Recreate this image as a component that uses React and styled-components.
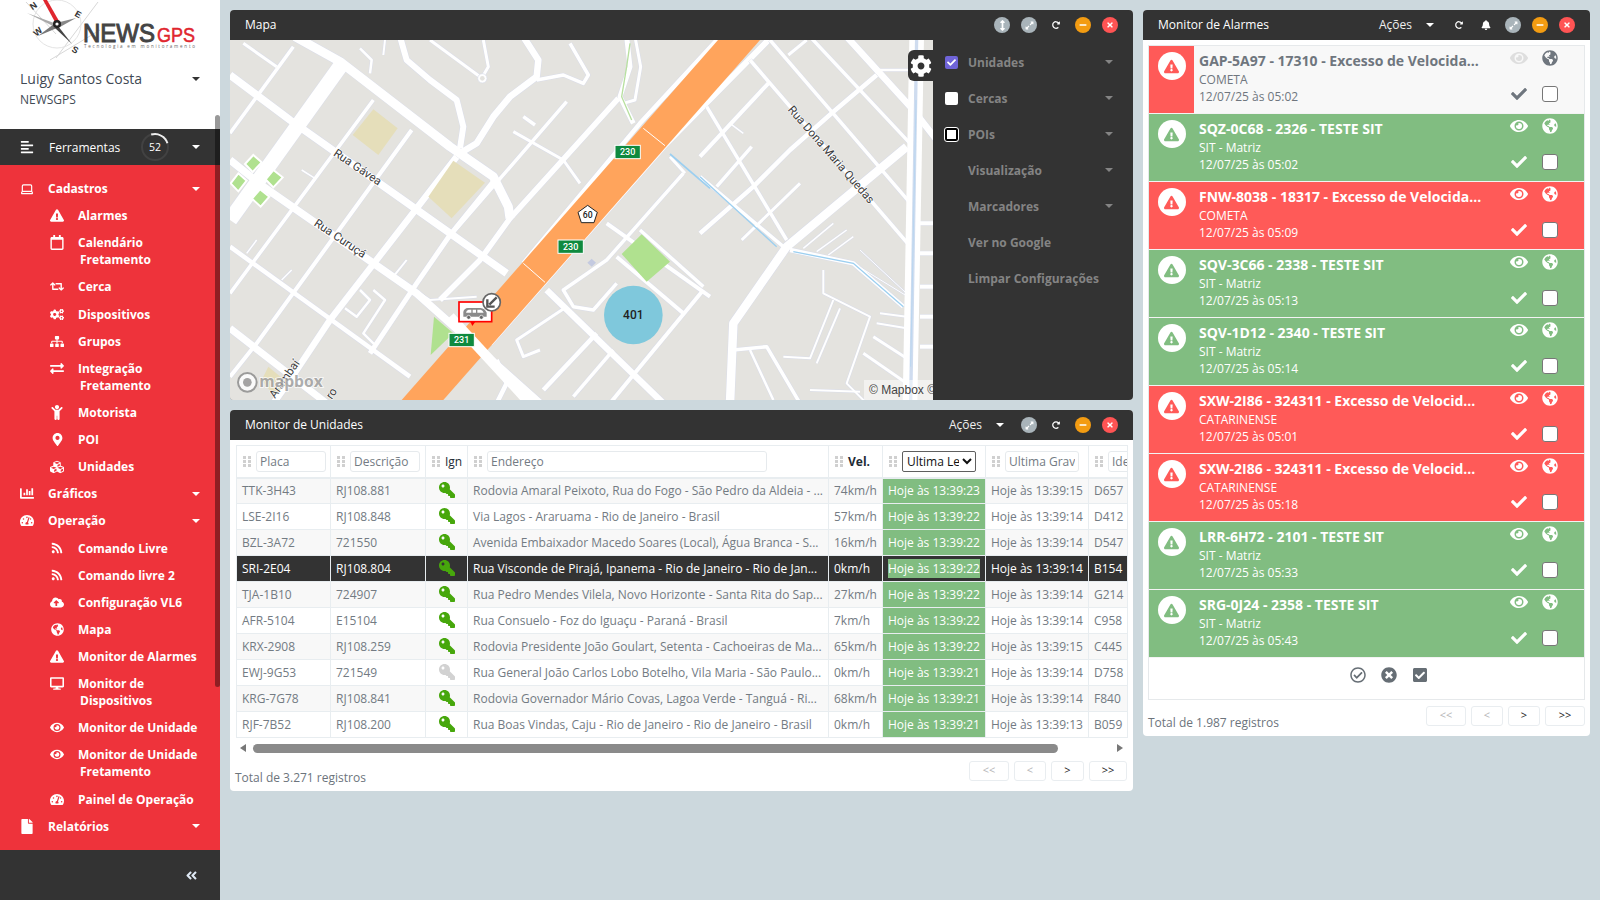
import React from "react";
import styled, { createGlobalStyle } from "styled-components";
import {
  FaAlignLeft, FaExclamationTriangle, FaRegCalendar, FaRetweet, FaCogs, FaSitemap, FaExchangeAlt,
  FaChild, FaMapMarkerAlt, FaCubes, FaChartBar, FaTachometerAlt, FaRss, FaCloudUploadAlt,
  FaGlobeAmericas, FaDesktop, FaEye, FaFile, FaAngleDoubleLeft, FaKey, FaCog, FaExpandAlt,
  FaArrowsAltV, FaRedoAlt, FaMinus, FaTimes, FaBell, FaCheck, FaRegCheckCircle, FaTimesCircle,
  FaCheckSquare,
} from "react-icons/fa";
import { LuLaptop } from "react-icons/lu";

const GlobalStyle = createGlobalStyle`
  html, body { margin: 0; padding: 0; height: 900px; overflow: hidden; background: #ccd8dd; }
  body { font-family: "Open Sans", "Liberation Sans", sans-serif; }
  * { box-sizing: border-box; }
`;

const Page = styled.div`
  display: flex;
  width: 1600px;
  height: 900px;
`;

/* sidebar */
const Sidebar = styled.aside`
  position: relative;
  width: 220px;
  height: 900px;
  display: flex;
  flex-direction: column;
  background: #fff;
  flex: none;
`;
const SideScroll = styled.div`
  position: absolute;
  right: 0;
  top: 115px;
  width: 5px;
  height: 572px;
  border-radius: 3px;
  background: rgba(0, 0, 0, 0.4);
`;
const UserBlock = styled.div`
  height: 129px;
  overflow: hidden;
`;
const LogoSvg = styled.svg`
  display: block;
  width: 220px;
  height: 62px;
`;
const UserRow = styled.div`
  display: flex;
  align-items: center;
  justify-content: space-between;
  padding: 7px 20px 0 20px;
  font-size: 14px;
  line-height: 20px;
  color: #3f4a55;
`;
const UserCompany = styled.div`
  padding: 2px 20px 0;
  font-size: 12px;
  line-height: 18px;
  color: #3f4a55;
`;
const Caret = styled.span`
  display: inline-block;
  width: 0;
  height: 0;
  border-left: 4px solid transparent;
  border-right: 4px solid transparent;
  border-top: 4px solid ${(p) => p.$color || "#fff"};
  flex: none;
`;
const ToolBar = styled.div`
  height: 36px;
  display: flex;
  align-items: center;
  padding: 0 20px;
  background: #333;
  color: #fff;
  font-size: 12px;
`;
const ToolLabel = styled.span`
  margin-left: 15px;
  flex: 1;
`;
const Spinner = styled.div`
  position: relative;
  width: 28px;
  height: 28px;
  margin-right: 23px;
  border-radius: 50%;
  border: 2px solid #424242;
  font-size: 10.5px;
  line-height: 24px;
  text-align: center;
  &::after {
    content: "";
    position: absolute;
    inset: -2px;
    border-radius: 50%;
    border: 2px solid transparent;
    border-top-color: #eee;
    transform: rotate(28deg);
  }
`;
const Menu = styled.nav`
  flex: 1;
  background: #ee333b;
  padding-top: 10px;
  color: #fff;
  font-size: 12px;
  font-weight: 700;
  line-height: 17px;
`;
const MenuRow = styled.div`
  display: flex;
  align-items: flex-start;
  padding: 5.07px 20px 5.07px ${(p) => (p.$sub ? "50px" : "20px")};
`;
const MenuIcon = styled.span`
  width: 14px;
  height: 17px;
  margin-right: 14px;
  flex: none;
  display: flex;
  align-items: center;
  justify-content: center;
  font-size: ${(p) => p.$size || 15}px;
  overflow: visible;
`;
const MenuText = styled.span`
  flex: 1;
  padding-left: 2px;
  text-indent: -2px;
  margin-right: ${(p) => (p.$sub ? "-10px" : "0")};
  white-space: pre-line;
`;
const MenuCaretSlot = styled.span`
  height: 17px;
  display: flex;
  align-items: center;
`;
const SideFoot = styled.div`
  height: 50px;
  background: #333;
  color: #dfe9f5;
  display: flex;
  align-items: center;
  justify-content: flex-end;
  padding-right: 22px;
  font-size: 13px;
`;

/* main */
const Main = styled.main`
  flex: 1;
  display: grid;
  grid-template-columns: 903px 447px;
  gap: 10px;
  padding: 10px;
  align-items: start;
`;
const Column = styled.div`
  display: flex;
  flex-direction: column;
  gap: 10px;
`;
const Panel = styled.section`
  background: #fff;
  border-radius: 4px;
  overflow: hidden;
`;
const PanelHead = styled.header`
  height: 30px;
  display: flex;
  align-items: center;
  background: #333;
  color: #fff;
  font-size: 12px;
  padding: 0 15px;
`;
const PanelTitle = styled.span`
  flex: 1;
  padding-bottom: 1px;
`;
const HeadTools = styled.div`
  display: flex;
  align-items: center;
  gap: 11px;
`;
const Acoes = styled.span`
  display: inline-flex;
  align-items: center;
  gap: 14px;
  margin-right: 17px;
  padding-bottom: 1px;
  color: #eee;
`;
const RoundBtn = styled.span`
  width: 16px;
  height: 16px;
  border-radius: 50%;
  display: flex;
  align-items: center;
  justify-content: center;
  background: ${(p) => p.$bg || "transparent"};
  color: #fff;
  font-size: ${(p) => p.$size || 8}px;
`;

/* map */
const MapBody = styled.div`
  height: 360px;
  display: flex;
  background: #333;
`;
const MapArea = styled.div`
  position: relative;
  width: 703px;
  height: 360px;
  overflow: hidden;
  background: #e4e3df;
`;
const MapSvg = styled.svg`
  display: block;
  width: 703px;
  height: 360px;
`;
const GearTab = styled.div`
  position: absolute;
  right: 0;
  top: 10px;
  width: 25px;
  height: 31px;
  border-radius: 6px 0 0 6px;
  background: #333;
  color: #fff;
  font-size: 22px;
  display: flex;
  align-items: center;
  justify-content: center;
`;
const Attribution = styled.div`
  position: absolute;
  right: 0;
  bottom: 0;
  width: 69px;
  height: 20px;
  overflow: hidden;
  white-space: nowrap;
  padding-left: 5px;
  background: rgba(255, 255, 255, 0.5);
  font-family: "Liberation Sans", sans-serif;
  font-size: 12px;
  line-height: 20px;
  color: #444;
`;
const Layers = styled.ul`
  flex: 1;
  list-style: none;
  margin: 0;
  padding: 4px 20px 0 12px;
`;
const LayerRow = styled.li`
  height: 36px;
  display: flex;
  align-items: center;
  color: #848484;
  font-size: 12px;
  font-weight: 700;
`;
const LayerCheck = styled.span`
  width: 13px;
  height: 13px;
  margin-right: 10px;
  flex: none;
  border-radius: 2px;
  display: flex;
  align-items: center;
  justify-content: center;
  color: #fff;
  font-size: 9px;
  visibility: ${(p) => (p.$kind === "none" ? "hidden" : "visible")};
  background: ${(p) => (p.$kind === "on" ? "#6f64d8" : "#fff")};
  border: ${(p) => (p.$kind === "focus" ? "2px solid #000" : "none")};
  outline: ${(p) => (p.$kind === "focus" ? "1px solid #fff" : "none")};
`;
const LayerLabel = styled.span`
  flex: 1;
`;

/* table */
const UnitsBody = styled.div`
  padding: 5px 6px 0;
`;
const Table = styled.table`
  width: 891px;
  table-layout: fixed;
  border-collapse: collapse;
  font-size: 12px;
  color: #737b83;
  border: 1px solid #e8edf0;
`;
const HeadCell = styled.th`
  height: 32px;
  padding: 0 0 0 6px;
  border: 1px solid #e8edf0;
  border-bottom-width: 2px;
  font-weight: ${(p) => (p.$bold ? 700 : 400)};
  color: #222b35;
  text-align: left;
  overflow: hidden;
`;
const HeadInner = styled.div`
  display: flex;
  align-items: center;
  gap: 5px;
  white-space: nowrap;
`;
const HeadInput = styled.input`
  width: ${(p) => p.$w}px;
  height: 21px;
  padding: 0 3px;
  border: 1px solid #e6eaed;
  border-radius: 3px;
  font: inherit;
  font-size: 12px;
  color: #737b83;
  background: #fff;
  outline: none;
`;
const HeadSelect = styled.select`
  width: 74px;
  height: 21px;
  padding: 0;
  border: 1px solid #5f5f5f;
  border-radius: 2px;
  font: inherit;
  font-size: 12px;
  color: #111;
  background: #fff;
`;
const Row = styled.tr`
  height: 26px;
  background: ${(p) => (p.$selected ? "#333" : p.$odd ? "#f8f8f8" : "#fff")};
  color: ${(p) => (p.$selected ? "#fff" : "inherit")};
`;
const Cell = styled.td`
  padding: 0 5px;
  border: 1px solid #e8edf0;
  white-space: nowrap;
  overflow: hidden;
  text-align: ${(p) => (p.$center ? "center" : "left")};
  background: ${(p) => (p.$live && !p.$selected ? "#81bd81" : "transparent")};
  color: ${(p) => (p.$live ? "#fff" : "inherit")};
`;
const LiveText = styled.span`
  background: ${(p) => (p.$selected ? "#81bd81" : "transparent")};
  padding: 1px 0;
`;
const KeyIcon = styled(FaKey)`
  transform: scaleX(-1);
  font-size: 16px;
  vertical-align: -3px;
  color: ${(p) => (p.$off ? "#d2d2d2" : "#47a70c")};
`;
const HScroll = styled.div`
  width: 891px;
  height: 16px;
  margin-top: 2px;
  display: flex;
  align-items: center;
  justify-content: space-between;
  padding: 0 4px;
`;
const ScrollArrow = styled.span`
  width: 0;
  height: 0;
  border-top: 4px solid transparent;
  border-bottom: 4px solid transparent;
  ${(p) => (p.$left ? "border-right: 6px solid #777;" : "border-left: 6px solid #777;")}
`;
const ScrollThumb = styled.span`
  width: 805px;
  height: 9px;
  margin: 0 auto 0 7px;
  border-radius: 5px;
  background: #8a8a8a;
`;
const Footer = styled.div`
  display: flex;
  align-items: flex-start;
  justify-content: space-between;
  padding: ${(p) => p.$pad};
  font-size: 12px;
  color: #6c747c;
`;
const FooterTotal = styled.span`
  padding-top: 8px;
  line-height: 18px;
`;
const Pager = styled.div`
  display: flex;
  gap: 5px;
`;
const PageBtn = styled.span`
  width: ${(p) => p.$w}px;
  height: 20px;
  border: 1px solid #e9edf0;
  border-radius: 3px;
  text-align: center;
  font-size: 11px;
  line-height: 16px;
  color: ${(p) => (p.$off ? "#b5b5b5" : "#222")};
`;

/* alarms */
const AlarmBody = styled.div`
  padding: 5px 5px 0;
`;
const AlarmBox = styled.div`
  border: 1px solid #e6e9eb;
`;
const AlarmRow = styled.div`
  height: 68px;
  display: flex;
  border-bottom: 1px solid #f3f3f3;
  background: ${(p) => (p.$tone === "red" ? "#ff5a58" : p.$tone === "green" ? "#81bd81" : "#f8f8f8")};
  color: ${(p) => (p.$tone === "gray" ? "#6f767e" : "#fff")};
`;
const AlarmSide = styled.div`
  width: 45px;
  flex: none;
  padding-top: 6px;
  display: flex;
  justify-content: center;
  background: ${(p) => (p.$tone === "gray" ? "#ff5a58" : "transparent")};
`;
const AlarmBadge = styled.span`
  width: 28px;
  height: 28px;
  border-radius: 50%;
  background: #fff;
  display: flex;
  align-items: center;
  justify-content: center;
  font-size: 15px;
  color: ${(p) => (p.$tone === "green" ? "#81bd81" : "#ff5a58")};
`;
const AlarmText = styled.div`
  width: 288px;
  padding: 5px 0 0 5px;
  flex: none;
`;
const AlarmTitle = styled.div`
  font-size: 14px;
  font-weight: 700;
  line-height: 20px;
  white-space: nowrap;
  overflow: hidden;
`;
const AlarmLine = styled.div`
  font-size: 12px;
  line-height: 17px;
`;
const AlarmActions = styled.div`
  display: grid;
  grid-template-columns: 31px 31px;
  grid-template-rows: 24px 36px;
  padding-left: 21px;
  justify-items: center;
  align-items: center;
  font-size: 16px;
`;
const GhostEye = styled(FaEye)`
  font-size: 18px;
  color: ${(p) => (p.$tone === "gray" ? "#dedede" : "#fff")};
`;
const CheckBox = styled.span`
  width: 16px;
  height: 16px;
  border: 1px solid #777;
  border-radius: 3px;
  background: #fff;
  margin-top: 11px;
`;
const CheckMark = styled(FaCheck)`
  margin-top: 11px;
`;
const AlarmFoot = styled.div`
  height: 41px;
  display: flex;
  justify-content: center;
  gap: 15px;
  padding: 9px 0 0 44px;
  color: #666e75;
  font-size: 16px;
`;

const sideMenu = [
  { label: "Cadastros", icon: <LuLaptop />, size: 16, open: true },
  { label: "Alarmes", icon: <FaExclamationTriangle />, sub: true },
  { label: "Calendário\nFretamento", icon: <FaRegCalendar />, sub: true },
  { label: "Cerca", icon: <FaRetweet />, sub: true },
  { label: "Dispositivos", icon: <FaCogs />, sub: true },
  { label: "Grupos", icon: <FaSitemap />, sub: true },
  { label: "Integração\nFretamento", icon: <FaExchangeAlt />, sub: true },
  { label: "Motorista", icon: <FaChild />, sub: true },
  { label: "POI", icon: <FaMapMarkerAlt />, sub: true, size: 13 },
  { label: "Unidades", icon: <FaCubes />, sub: true, size: 16 },
  { label: "Gráficos", icon: <FaChartBar />, open: true },
  { label: "Operação", icon: <FaTachometerAlt />, open: true },
  { label: "Comando Livre", icon: <FaRss />, sub: true, size: 12 },
  { label: "Comando livre 2", icon: <FaRss />, sub: true, size: 12 },
  { label: "Configuração VL6", icon: <FaCloudUploadAlt />, sub: true },
  { label: "Mapa", icon: <FaGlobeAmericas />, sub: true, size: 13 },
  { label: "Monitor de Alarmes", icon: <FaExclamationTriangle />, sub: true },
  { label: "Monitor de\nDispositivos", icon: <FaDesktop />, sub: true },
  { label: "Monitor de Unidade", icon: <FaEye />, sub: true },
  { label: "Monitor de Unidade\nFretamento", icon: <FaEye />, sub: true },
  { label: "Painel de Operação", icon: <FaTachometerAlt />, sub: true },
  { label: "Relatórios", icon: <FaFile />, open: true },
];

const units = [
  ["TTK-3H43", "RJ108.881", "Rodovia Amaral Peixoto, Rua do Fogo - São Pedro da Aldeia - ...", "74km/h", "Hoje às 13:39:23", "Hoje às 13:39:15", "D657"],
  ["LSE-2I16", "RJ108.848", "Via Lagos - Araruama - Rio de Janeiro - Brasil", "57km/h", "Hoje às 13:39:22", "Hoje às 13:39:14", "D412"],
  ["BZL-3A72", "721550", "Avenida Embaixador Macedo Soares (Local), Água Branca - S...", "16km/h", "Hoje às 13:39:22", "Hoje às 13:39:14", "D547"],
  ["SRI-2E04", "RJ108.804", "Rua Visconde de Pirajá, Ipanema - Rio de Janeiro - Rio de Jan...", "0km/h", "Hoje às 13:39:22", "Hoje às 13:39:14", "B154"],
  ["TJA-1B10", "724907", "Rua Pedro Mendes Vilela, Novo Horizonte - Santa Rita do Sap...", "27km/h", "Hoje às 13:39:22", "Hoje às 13:39:14", "G214"],
  ["AFR-5104", "E15104", "Rua Consuelo - Foz do Iguaçu - Paraná - Brasil", "7km/h", "Hoje às 13:39:22", "Hoje às 13:39:14", "C958"],
  ["KRX-2908", "RJ108.259", "Rodovia Presidente João Goulart, Setenta - Cachoeiras de Ma...", "65km/h", "Hoje às 13:39:22", "Hoje às 13:39:15", "C445"],
  ["EWJ-9G53", "721549", "Rua General João Carlos Lobo Botelho, Vila Maria - São Paulo...", "0km/h", "Hoje às 13:39:21", "Hoje às 13:39:14", "D758", true],
  ["KRG-7G78", "RJ108.841", "Rodovia Governador Mário Covas, Lagoa Verde - Tanguá - Ri...", "68km/h", "Hoje às 13:39:21", "Hoje às 13:39:14", "F840"],
  ["RJF-7B52", "RJ108.200", "Rua Boas Vindas, Caju - Rio de Janeiro - Rio de Janeiro - Brasil", "0km/h", "Hoje às 13:39:21", "Hoje às 13:39:13", "B059"],
];

const alarms = [
  ["GAP-5A97 - 17310 - Excesso de Velocida...", "COMETA", "05:02", "gray"],
  ["SQZ-0C68 - 2326 - TESTE SIT", "SIT - Matriz", "05:02", "green"],
  ["FNW-8038 - 18317 - Excesso de Velocida...", "COMETA", "05:09", "red"],
  ["SQV-3C66 - 2338 - TESTE SIT", "SIT - Matriz", "05:13", "green"],
  ["SQV-1D12 - 2340 - TESTE SIT", "SIT - Matriz", "05:14", "green"],
  ["SXW-2I86 - 324311 - Excesso de Velocid...", "CATARINENSE", "05:01", "red"],
  ["SXW-2I86 - 324311 - Excesso de Velocid...", "CATARINENSE", "05:18", "red"],
  ["LRR-6H72 - 2101 - TESTE SIT", "SIT - Matriz", "05:33", "green"],
  ["SRG-0J24 - 2358 - TESTE SIT", "SIT - Matriz", "05:43", "green"],
];

// map coordinates are 3x page pixels, origin at the page corner of the crop
const roads = [
  ["195,110 330,185 660,440 790,530 835,620 840,655", 18],
  ["330,200 0,660", 30],
  ["0,225 180,360 830,820", 15],
  ["0,480 100,560 560,880 930,1210", 15],
  ["0,740 540,1130", 9],
  ["0,985 290,1210", 14],
  ["950,870 1300,1210", 13],
  ["190,140 0,400", 7],
  ["430,300 200,610 0,880", 7],
  ["545,390 80,1030 0,1130", 8],
  ["680,470 300,960 180,1140 130,1210", 13],
  ["790,545 660,705 560,850 420,1060", 10],
  ["740,890 600,900 570,880", 4],
  ["1010,305 850,490 650,720", 7],
  ["880,350 915,375", 7],
  ["850,395 1000,480 1050,550", 6],
  ["1165,295 840,655 750,780 630,900", 11],
  ["1470,110 1230,370 880,790", 9],
  ["1625,110 1300,440 780,1030", 12],
  ["510,110 530,180 600,240 680,300 700,380 690,445", 12],
  ["600,120 750,230", 6],
  ["760,120 775,200 755,235", 6],
  ["880,110 925,180 920,230 840,290 790,350 740,430 690,460", 13],
  ["920,240 1000,225 1060,250 1075,225 1020,130", 7],
  ["1190,110 1200,200 1170,290 1210,370", 10],
  ["1215,110 1232,200 1215,300 1180,310", 6],
  ["40,130 140,200", 6],
  ["390,145 425,180 420,220", 5],
  ["465,120 460,165", 4],
  ["1130,670 1440,890", 8],
  ["1230,690 1420,860", 7],
  ["1160,770 1360,940", 8],
  ["1360,520 1130,780 1000,870 1030,920 1090,930 1160,850", 7],
  ["1420,870 1230,1100 1140,1210", 8],
  ["1100,1000 940,1170", 9],
  ["1150,1050 1030,1190", 7],
  ["1010,920 860,1020 880,1070 930,1050", 6],
  ["1320,470 1365,520", 6],
  ["430,870 465,900 400,1000 440,1040", 5],
  ["390,870 420,900 380,950 345,925", 5],
  ["530,780 490,830", 4],
  ["185,810 155,840", 3],
  ["80,720 50,760", 3],
  ["215,510 255,535", 3],
  ["800,1080 830,1150 800,1210", 9],
];
const roadsRight = [
  ["620,440 260,740 100,970 90,1210", 17],
  ["440,110 640,330 710,420", 13],
  ["530,225 400,335 270,450 160,560 0,700", 9],
  ["320,120 265,165", 6],
  ["205,250 0,470", 8],
  ["155,440 50,560", 7],
  ["300,550 125,720", 6],
  ["210,120 640,620", 7],
  ["330,110 630,430", 7],
  ["150,180 640,750", 7],
  ["20,320 260,720", 7],
  ["0,530 250,740", 7],
  ["90,370 130,400", 3],
  ["370,810 370,880 510,950 440,1150 500,1210", 4],
  ["420,925 350,1090", 4],
  ["100,1050 200,1040 300,1210", 7],
  ["150,1050 220,1200", 5],
  ["250,1070 330,1075 400,900", 4],
  ["330,1170 480,1175", 4],
  ["490,1060 620,1150", 6],
  ["520,1010 620,1075", 6],
  ["530,970 620,985", 4],
  ["540,940 620,950", 4],
  ["270,750 460,790 610,920", 9],
  ["310,745 400,670", 3],
  ["350,755 440,690", 3],
  ["385,765 460,710", 3],
  ["460,790 640,900", 2],
  ["480,750 630,890", 2],
  ["660,670 700,670", 8],
  ["660,760 700,760", 8],
  ["660,860 700,860", 8],
  ["660,950 700,950", 8],
  ["660,1040 700,1040", 8],
  ["540,210 640,210", 5],
];
const patches = ["70,465 95,487 68,516 45,492", "130,510 158,532 130,562 107,538", "25,520 50,542 25,574 2,550", "90,568 118,590 92,620 66,596"];
const greens = ["1235,703 1320,785 1250,845 1175,762", "612,950 670,1000 602,1065"];
const sands = ["430,328 503,385 445,465 368,405", "670,482 765,548 665,655 595,590", "115,1100 175,1150 130,1185 95,1140"];
const shields = [[1193, 456, "230"], [1022, 740, "230"], [695, 1020, "231"]];

function RoadLayer({ list }) {
  return (
    <>
      {list.map(([pts, w], i) => (
        <polyline key={"c" + i} points={pts} fill="none" stroke="#dadde9" strokeWidth={w * 1.5 + 3} strokeLinejoin="round" />
      ))}
      {list.map(([pts, w], i) => (
        <polyline key={"w" + i} points={pts} fill="none" stroke="#fff" strokeWidth={w * 1.5} strokeLinejoin="round" />
      ))}
    </>
  );
}

function MapDrawing() {
  const label = { fontFamily: "Roboto, sans-serif", fontSize: 35, fill: "#3c3c3c", stroke: "#fff", strokeWidth: 3, paintOrder: "stroke" };
  return (
    <MapSvg viewBox="0 120 2109 1080">
      <rect x="0" y="120" width="2109" height="1080" fill="#e4e3df" />
      <RoadLayer list={roads} />
      {sands.map((p, i) => <polygon key={i} points={p} fill="#e5deba" />)}
      {greens.map((p, i) => <polygon key={i} points={p} fill="#b0e18f" />)}
      {patches.map((p, i) => <polygon key={i} points={p} fill="#b0e18f" stroke="#fff" strokeWidth="6" />)}
      <polygon points="1085,776 1098,788 1085,800 1072,788" fill="#c4cae0" />
      <g transform="translate(1410,0)">
        <RoadLayer list={roadsRight} />
        <polyline points="650,110 630,1210" fill="none" stroke="#fff" strokeWidth="44" />
        <polyline points="650,110 632,1210" fill="none" stroke="#cfdcef" strokeWidth="10" />
        <polyline points="0,530 230,740" fill="none" stroke="#9ccff0" strokeWidth="4" />
        <polyline points="280,755 460,790 610,920" fill="none" stroke="#9ccff0" strokeWidth="4" />
        <polyline points="648,300 632,1100" fill="none" stroke="#b9d6f0" strokeWidth="3" />
      </g>
      <polyline points="1320,462 1440,565" fill="none" stroke="#9ccff0" strokeWidth="5" />
      <polyline points="1200,130 1190,200 1175,290 1205,360" fill="none" stroke="#b8e0a0" strokeWidth="4" />
      <polygon points="515,1200 1464,120 1590,120 640,1200" fill="#ffa45c" />
      <line x1="1240" y1="385" x2="1305" y2="437" stroke="#fff" strokeWidth="3" />
      <line x1="880" y1="790" x2="945" y2="847" stroke="#fff" strokeWidth="3" />
      <polyline points="660,950 900,1210" fill="none" stroke="#fff" strokeWidth="30" />
      <circle cx="757" cy="235" r="14" fill="#fff" stroke="#d7dbe9" strokeWidth="2" />
      <circle cx="757" cy="235" r="7" fill="#e4e3df" />
      <g transform="translate(1210,945)">
        <circle r="88" fill="#7fc8dc" />
        <text y="13" textAnchor="middle" fontFamily="Roboto, sans-serif" fontSize="36" fontWeight="500" fill="#222">401</text>
      </g>
      <text transform="translate(308,465) rotate(34)" {...label}>Rua Gávea</text>
      <text transform="translate(250,675) rotate(34)" {...label}>Rua Curuçá</text>
      <text transform="translate(135,1197) rotate(-55)" {...label}>Arambaí</text>
      <text transform="translate(305,1200) rotate(-55)" {...label}>ro</text>
      <text transform="translate(1672,330) rotate(49)" {...label}>Rua Dona Maria Quedas</text>
      {shields.map(([x, y, n]) => (
        <g key={x} transform={`translate(${x},${y})`}>
          <rect x="-38" y="-20" width="76" height="40" fill="#0f8a3f" stroke="#fff" strokeWidth="3" />
          <text y="10" textAnchor="middle" fontFamily="Roboto, sans-serif" fontSize="27" fontWeight="500" fill="#fff">{n}</text>
        </g>
      ))}
      <g transform="translate(1073,643)">
        <polygon points="0,-27 29,-6 19,25 -19,25 -29,-6" fill="#fff" stroke="#222" strokeWidth="3" />
        <text y="10" textAnchor="middle" fontFamily="Roboto, sans-serif" fontSize="26" fontWeight="500" fill="#222">60</text>
      </g>
      <g>
        <polygon points="720,962 738,962 727,978" fill="#f00" />
        <rect x="687" y="906" width="98" height="59" fill="#fff" stroke="#f00" strokeWidth="5" />
        <path d="M700 950 v-14 q2 -11 14 -12 h38 q12 1 18 14 v12 z" fill="#8a8a8a" />
        <path d="M708 938 q1 -8 8 -9 h8 v9 z M728 929 h10 v9 h-10 z M742 929 h10 q6 2 9 9 h-19 z" fill="#fff" />
        <circle cx="716" cy="952" r="6" fill="#666" stroke="#fff" strokeWidth="2" />
        <circle cx="754" cy="952" r="6" fill="#666" stroke="#fff" strokeWidth="2" />
        <circle cx="785" cy="907" r="26" fill="#fff" stroke="#666" strokeWidth="5" />
        <path d="M800 892 L778 914 M772 898 v22 h22" fill="none" stroke="#555" strokeWidth="7" />
      </g>
      <g opacity="0.85">
        <circle cx="52" cy="1147" r="28" fill="#fff" stroke="#8f8f8f" strokeWidth="6" />
        <circle cx="52" cy="1147" r="13" fill="#999" />
        <text x="88" y="1162" fontFamily="'Open Sans', sans-serif" fontSize="47" fontWeight="700" fill="#a0a0a0" stroke="#fff" strokeWidth="5" paintOrder="stroke">mapbox</text>
      </g>
    </MapSvg>
  );
}

function Logo() {
  const spokes = [[6, 2, 36, 24], [78, 2, 36, 48], [30, 60, 80, 20]];
  return (
    <LogoSvg viewBox="0 0 220 62">
      {spokes.map(([a, b, c, d], i) => <line key={i} x1={a + 20} y1={b} x2={c + 20} y2={d + 10} stroke="#d8d8d8" />)}
      <circle cx="57" cy="24" r="24" fill="none" stroke="#e4e4e4" />
      <polygon points="27,13 54,23 55,27" fill="#aaa" />
      <polygon points="76,18 60,22 60,27" fill="#888" />
      <polygon points="38,36 54,24 57,28" fill="#777" />
      <polygon points="43,0 55,22 59,21 47,0" fill="#e0262e" />
      <polygon points="72,44 58,26 55,28" fill="#444" />
      <circle cx="57" cy="24" r="4" fill="#222" />
      <circle cx="57" cy="24" r="1.6" fill="#fff" />
      <g fontFamily="'Liberation Sans', sans-serif" fontWeight="700" fontSize="9" fill="#333">
        <text x="30" y="8" transform="rotate(-35 35 5)">N</text>
        <text x="75" y="18" transform="rotate(30 79 15)">E</text>
        <text x="33" y="35" transform="rotate(-40 37 31)">W</text>
        <text x="72" y="53" transform="rotate(30 75 50)">S</text>
      </g>
      <text x="83" y="42" fontFamily="'Liberation Sans', sans-serif" fontSize="26.5" fill="#444" stroke="#444" strokeWidth="1" textLength="72" lengthAdjust="spacingAndGlyphs">NEWS</text>
      <text x="157" y="42" fontFamily="'Liberation Sans', sans-serif" fontSize="19.5" fill="#e0262e" stroke="#e0262e" strokeWidth="0.5" textLength="38" lengthAdjust="spacingAndGlyphs">GPS</text>
      <text x="84" y="48" fontFamily="'Open Sans', sans-serif" fontSize="4.5" fill="#666" textLength="111">Tecnologia em monitoramento</text>
    </LogoSvg>
  );
}

function Grip() {
  return (
    <svg width="8" height="11" viewBox="0 0 8 11" style={{ flex: "none" }}>
      {[0, 4, 8].map((y) => (
        <g key={y} fill="#d0d0d0">
          <rect x="0" y={y} width="3" height="3" />
          <rect x="5" y={y} width="3" height="3" />
        </g>
      ))}
    </svg>
  );
}

function WindowTools({ vertical }) {
  return (
    <>
      {vertical && <RoundBtn $bg="#a9b4ba" $size={11}><FaArrowsAltV /></RoundBtn>}
      <RoundBtn $bg="#a9b4ba" $size={9}><FaExpandAlt /></RoundBtn>
      <RoundBtn $size={8}><FaRedoAlt /></RoundBtn>
      <RoundBtn $bg="#f39c12"><FaMinus /></RoundBtn>
      <RoundBtn $bg="#ff5454"><FaTimes /></RoundBtn>
    </>
  );
}

function Paging({ sizes }) {
  const labels = ["<<", "<", ">", ">>"];
  return (
    <Pager>
      {labels.map((l, i) => <PageBtn key={l} $w={sizes[i]} $off={i < 2}>{l}</PageBtn>)}
    </Pager>
  );
}

export default function App() {
  return (
    <Page>
      <GlobalStyle />
      <Sidebar>
        <UserBlock>
          <Logo />
          <UserRow>Luigy Santos Costa <Caret $color="#333" /></UserRow>
          <UserCompany>NEWSGPS</UserCompany>
        </UserBlock>
        <ToolBar>
          <FaAlignLeft size={14} />
          <ToolLabel>Ferramentas</ToolLabel>
          <Spinner>52</Spinner>
          <Caret />
        </ToolBar>
        <Menu>
          {sideMenu.map((m) => (
            <MenuRow key={m.label} $sub={m.sub}>
              <MenuIcon $size={m.size}>{m.icon}</MenuIcon>
              <MenuText $sub={m.sub}>{m.label}</MenuText>
              {m.open && <MenuCaretSlot><Caret /></MenuCaretSlot>}
            </MenuRow>
          ))}
        </Menu>
        <SideFoot><FaAngleDoubleLeft /></SideFoot>
        <SideScroll />
      </Sidebar>

      <Main>
        <Column>
          <Panel>
            <PanelHead>
              <PanelTitle>Mapa</PanelTitle>
              <HeadTools><WindowTools vertical /></HeadTools>
            </PanelHead>
            <MapBody>
              <MapArea>
                <MapDrawing />
                <GearTab><FaCog /></GearTab>
                <Attribution>© Mapbox ©</Attribution>
              </MapArea>
              <Layers>
                <LayerRow><LayerCheck $kind="on"><FaCheck /></LayerCheck><LayerLabel>Unidades</LayerLabel><Caret $color="#848484" /></LayerRow>
                <LayerRow><LayerCheck $kind="off" /><LayerLabel>Cercas</LayerLabel><Caret $color="#848484" /></LayerRow>
                <LayerRow><LayerCheck $kind="focus" /><LayerLabel>POIs</LayerLabel><Caret $color="#848484" /></LayerRow>
                <LayerRow><LayerCheck $kind="none" /><LayerLabel>Visualização</LayerLabel><Caret $color="#848484" /></LayerRow>
                <LayerRow><LayerCheck $kind="none" /><LayerLabel>Marcadores</LayerLabel><Caret $color="#848484" /></LayerRow>
                <LayerRow><LayerCheck $kind="none" /><LayerLabel>Ver no Google</LayerLabel></LayerRow>
                <LayerRow><LayerCheck $kind="none" /><LayerLabel>Limpar Configurações</LayerLabel></LayerRow>
              </Layers>
            </MapBody>
          </Panel>

          <Panel>
            <PanelHead>
              <PanelTitle>Monitor de Unidades</PanelTitle>
              <Acoes>Ações <Caret /></Acoes>
              <HeadTools><WindowTools /></HeadTools>
            </PanelHead>
            <UnitsBody>
              <Table>
                <colgroup>
                  {[94, 95, 42, 361, 54, 103, 103, 39].map((w, i) => <col key={i} width={w} />)}
                </colgroup>
                <thead>
                  <tr>
                    <HeadCell><HeadInner><Grip /><HeadInput $w={70} readOnly value="Placa" /></HeadInner></HeadCell>
                    <HeadCell><HeadInner><Grip /><HeadInput $w={70} readOnly value="Descrição" /></HeadInner></HeadCell>
                    <HeadCell><HeadInner><Grip />Ign</HeadInner></HeadCell>
                    <HeadCell><HeadInner><Grip /><HeadInput $w={280} readOnly value="Endereço" /></HeadInner></HeadCell>
                    <HeadCell $bold><HeadInner><Grip />Vel.</HeadInner></HeadCell>
                    <HeadCell><HeadInner><Grip />
                      <HeadSelect defaultValue="Ultima Leitura"><option>Ultima Leitura</option></HeadSelect>
                    </HeadInner></HeadCell>
                    <HeadCell><HeadInner><Grip /><HeadInput $w={74} readOnly value="Ultima Gravação" /></HeadInner></HeadCell>
                    <HeadCell><HeadInner><Grip /><HeadInput $w={30} readOnly value="Identificador" /></HeadInner></HeadCell>
                  </tr>
                </thead>
                <tbody>
                  {units.map((u, i) => {
                    const selected = u[0] === "SRI-2E04";
                    return (
                      <Row key={u[0]} $odd={i % 2 === 0} $selected={selected}>
                        <Cell>{u[0]}</Cell>
                        <Cell>{u[1]}</Cell>
                        <Cell $center><KeyIcon $off={u[7]} /></Cell>
                        <Cell>{u[2]}</Cell>
                        <Cell>{u[3]}</Cell>
                        <Cell $live $selected={selected}><LiveText $selected={selected}>{u[4]}</LiveText></Cell>
                        <Cell>{u[5]}</Cell>
                        <Cell>{u[6]}</Cell>
                      </Row>
                    );
                  })}
                </tbody>
              </Table>
              <HScroll>
                <ScrollArrow $left />
                <ScrollThumb />
                <ScrollArrow />
              </HScroll>
            </UnitsBody>
            <Footer $pad="5px 6px 4px 5px">
              <FooterTotal>Total de 3.271 registros</FooterTotal>
              <Paging sizes={[40, 32, 33, 38]} />
            </Footer>
          </Panel>
        </Column>

        <Panel>
          <PanelHead>
            <PanelTitle>Monitor de Alarmes</PanelTitle>
            <Acoes>Ações <Caret /></Acoes>
            <HeadTools>
              <RoundBtn $size={8}><FaRedoAlt /></RoundBtn>
              <RoundBtn $size={10}><FaBell /></RoundBtn>
              <RoundBtn $bg="#a9b4ba" $size={9}><FaExpandAlt /></RoundBtn>
              <RoundBtn $bg="#f39c12"><FaMinus /></RoundBtn>
              <RoundBtn $bg="#ff5454"><FaTimes /></RoundBtn>
            </HeadTools>
          </PanelHead>
          <AlarmBody>
            <AlarmBox>
              {alarms.map((a, i) => (
                <AlarmRow key={i} $tone={a[3]}>
                  <AlarmSide $tone={a[3]}>
                    <AlarmBadge $tone={a[3]}><FaExclamationTriangle /></AlarmBadge>
                  </AlarmSide>
                  <AlarmText>
                    <AlarmTitle>{a[0]}</AlarmTitle>
                    <AlarmLine>{a[1]}</AlarmLine>
                    <AlarmLine>12/07/25 às {a[2]}</AlarmLine>
                  </AlarmText>
                  <AlarmActions>
                    <GhostEye $tone={a[3]} />
                    <FaGlobeAmericas />
                    <CheckMark />
                    <CheckBox />
                  </AlarmActions>
                </AlarmRow>
              ))}
              <AlarmFoot>
                <FaRegCheckCircle />
                <FaTimesCircle />
                <FaCheckSquare />
              </AlarmFoot>
            </AlarmBox>
            <Footer $pad="6px 0 4px 0">
              <FooterTotal>Total de 1.987 registros</FooterTotal>
              <Paging sizes={[40, 32, 32, 40]} />
            </Footer>
          </AlarmBody>
        </Panel>
      </Main>
    </Page>
  );
}
